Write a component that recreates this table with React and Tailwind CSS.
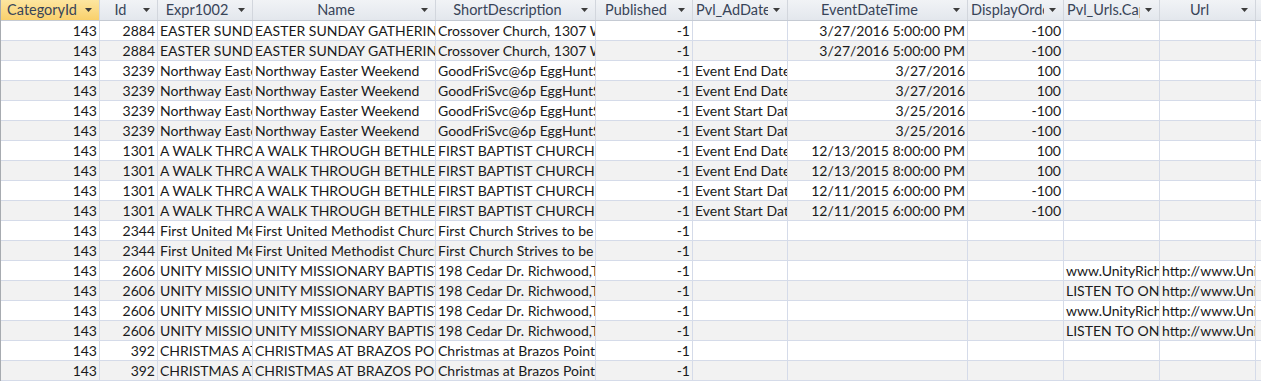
import React from 'react';

// Datasheet columns: label, width (incl. right grid line), alignment
const columns = [
    { key: 'cat', label: 'CategoryId', width: 'w-[99px]', num: true },
    { key: 'id', label: 'Id', width: 'w-[58px]', num: true },
    { key: 'expr', label: 'Expr1002', width: 'w-[95px]' },
    { key: 'name', label: 'Name', width: 'w-[183px]' },
    { key: 'short', label: 'ShortDescription', width: 'w-[160px]' },
    { key: 'pub', label: 'Published', width: 'w-[97px]', num: true },
    { key: 'ad', label: 'Pvl_AdDates', width: 'w-[95px]' },
    { key: 'edt', label: 'EventDateTime', width: 'w-[180px]', num: true },
    { key: 'ord', label: 'DisplayOrder', width: 'w-[96px]', num: true },
    { key: 'cap', label: 'Pvl_Urls.Caption', width: 'w-[96px]' },
    { key: 'url', label: 'Url', width: 'w-[96px]' },
];

const easter = ['143', '2884', 'EASTER SUNDAY GATHERING', 'EASTER SUNDAY GATHERING', 'Crossover Church, 1307 W. Plantation', '-1', '', '3/27/2016 5:00:00 PM', '-100', '', ''];
const northEnd = ['143', '3239', 'Northway Easter Weekend', 'Northway Easter Weekend', 'GoodFriSvc@6p EggHuntSat@10a', '-1', 'Event End Date', '3/27/2016', '100', '', ''];
const northStart = ['143', '3239', 'Northway Easter Weekend', 'Northway Easter Weekend', 'GoodFriSvc@6p EggHuntSat@10a', '-1', 'Event Start Date', '3/25/2016', '-100', '', ''];
const walkEnd = ['143', '1301', 'A WALK THROUGH BETHLEHEM', 'A WALK THROUGH BETHLEHEM', 'FIRST BAPTIST CHURCH PRESENTS', '-1', 'Event End Date', '12/13/2015 8:00:00 PM', '100', '', ''];
const walkStart = ['143', '1301', 'A WALK THROUGH BETHLEHEM', 'A WALK THROUGH BETHLEHEM', 'FIRST BAPTIST CHURCH PRESENTS', '-1', 'Event Start Date', '12/11/2015 6:00:00 PM', '-100', '', ''];
const methodist = ['143', '2344', 'First United Methodist Church', 'First United Methodist Church', 'First Church Strives to be', '-1', '', '', '', '', ''];
const unityWeb = ['143', '2606', 'UNITY MISSIONARY BAPTIST CHURCH', 'UNITY MISSIONARY BAPTIST CHURCH', '198 Cedar Dr. Richwood,TX', '-1', '', '', '', 'www.UnityRichwood.org', 'http://www.UnityRichwood.org'];
const unityListen = ['143', '2606', 'UNITY MISSIONARY BAPTIST CHURCH', 'UNITY MISSIONARY BAPTIST CHURCH', '198 Cedar Dr. Richwood,TX', '-1', '', '', '', 'LISTEN TO ONLINE', 'http://www.UnityRichwood.org'];
const brazos = ['143', '392', 'CHRISTMAS AT BRAZOS POINTE', 'CHRISTMAS AT BRAZOS POINTE', 'Christmas at Brazos Pointe', '-1', '', '', '', '', ''];

const rows = [
    easter, easter, northEnd, northEnd, northStart, northStart,
    walkEnd, walkEnd, walkStart, walkStart, methodist, methodist,
    unityWeb, unityListen, unityWeb, unityListen, brazos, brazos,
];

const DropArrow = () => (
    <svg width="7" height="4" viewBox="0 0 7 4" className="shrink-0 ml-[5px]">
        <path d="M0 0 H7 L3.5 4 Z" fill="#3c3c3c" />
    </svg>
);

const App = () => {
    return (
        <div
            className="w-[1261px] h-[381px] overflow-hidden bg-white text-[14px] text-[#1a1a1a] border-l border-[#a7abb0]"
            style={{ fontFamily: 'Lato, "Open Sans", sans-serif' }}
        >
            {/* --- Header row --- */}
            <div className="flex h-[21px] border-b border-[#c5cad3] bg-gradient-to-b from-[#f1f3f6] to-[#e3e7ed]">
                {columns.map((col, i) => (
                    <div
                        key={col.key}
                        className={`${col.width} shrink-0 flex items-center pl-[3px] pr-[7px] border-r border-[#d2d6dd] text-[#384458] text-[14.5px] ${i === 0 ? 'bg-gradient-to-b from-[#fde6a0] to-[#f9d06b]' : ''}`}
                    >
                        <div className="flex-1 min-w-0 overflow-hidden whitespace-nowrap text-center leading-[20px]">{col.label}</div>
                        <DropArrow />
                    </div>
                ))}
                <div className="flex-1" />
            </div>

            {/* --- Data rows --- */}
            {rows.map((row, r) => (
                <div
                    key={r}
                    className={`flex h-[20px] border-b border-[#d5dbe9] ${r % 2 === 0 ? 'bg-white' : 'bg-[#f2f2f2]'}`}
                >
                    {columns.map((col, c) => (
                        <div
                            key={col.key}
                            className={`${col.width} shrink-0 overflow-hidden whitespace-nowrap leading-[19px] px-[2px] border-r border-[#d5dbe9] ${col.num ? 'text-right' : 'text-left'}`}
                        >
                            {row[c]}
                        </div>
                    ))}
                    <div className="flex-1" />
                </div>
            ))}
        </div>
    );
};

export default App;
